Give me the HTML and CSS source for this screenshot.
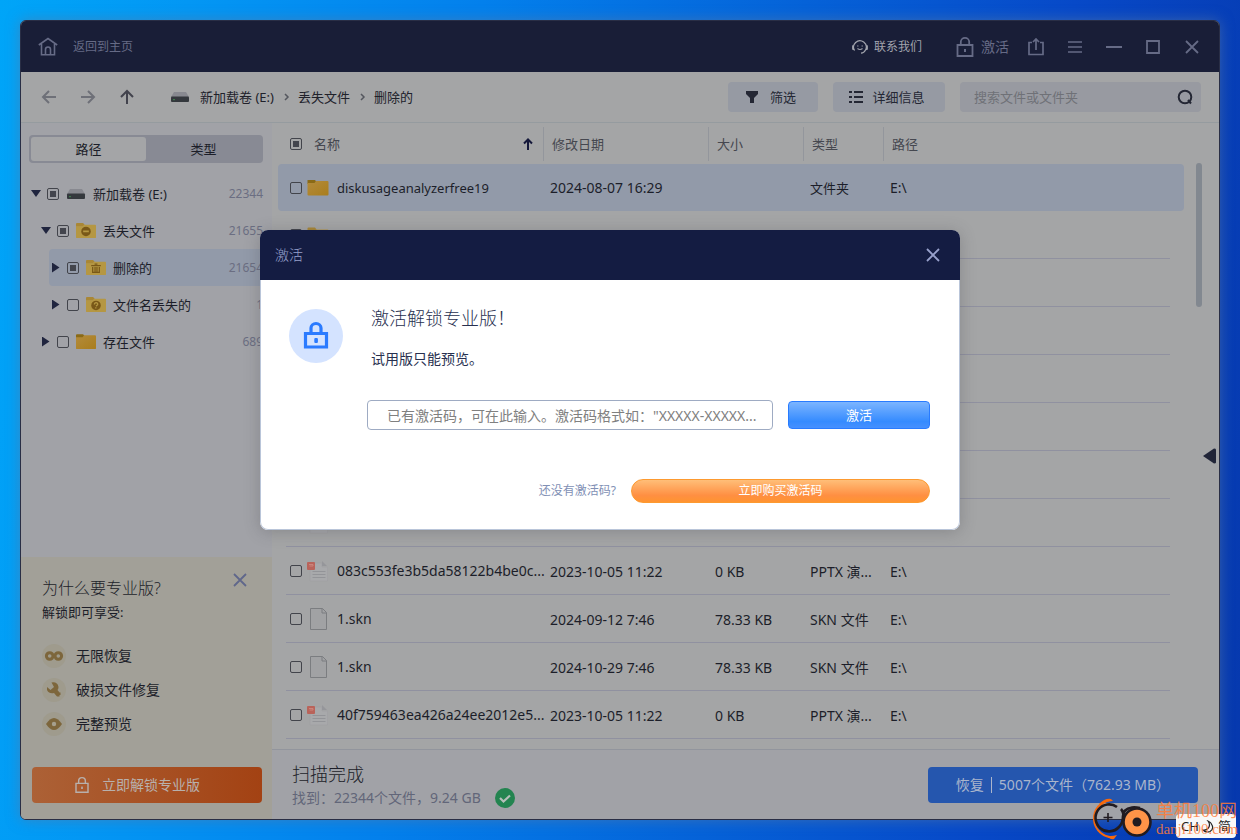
FILE: index.html
```html
<!DOCTYPE html>
<html lang="zh-CN">
<head>
<meta charset="utf-8">
<title>激活</title>
<link rel="stylesheet" href="styles.css">
</head>
<body>
<svg class="defs" aria-hidden="true">
  <defs>
    <linearGradient id="gold" x1="0" y1="0" x2="1" y2="1"><stop offset="0" stop-color="#b38b3c"/><stop offset="1" stop-color="#a97d1c"/></linearGradient>
    <symbol id="i-folder" viewBox="0 0 21 17"><path d="M0 1.5Q0 1 1 1h6.5l1.5 2v2H0z" fill="#8a6a16"/><path d="M0 4h7l1.5-2H20q1 0 1 1v12.5q0 1-1 1H1q-1 0-1-1z" fill="url(#gold)"/></symbol>
    <symbol id="i-folder-light" viewBox="0 0 21 17"><path d="M0 1.5Q0 .5 1 .5h6.500l1.500 2v2H0z" fill="#a98736"/><path d="M0 4h7l1.500-1.500H20q1 0 1 1v12q0 1-1 1H1q-1 0-1-1z" fill="#b59743"/></symbol>
    <symbol id="i-drive" viewBox="0 0 18 12"><path d="M3 1h12l3 5H0z" fill="#888990"/><rect y="5.500" width="18" height="5.500" rx="1" fill="#34383d"/><rect x="2" y="8" width="2" height="1.200" fill="#3d7a4a"/></symbol>
    <symbol id="i-file" viewBox="0 0 20 24"><path d="M2.500 1.500h12l4 4v17h-16z" fill="#a1a2a4" stroke="#7b7d80"/><path d="M14 1.500v4.500h4.500" fill="none" stroke="#7b7d80"/></symbol>
    <symbol id="i-ppt" viewBox="0 0 22 24"><path d="M3 4h12v4h5.500v14H3z" fill="#a8a9ab" stroke="#9fa0a2" stroke-width=".6"/><path d="M15 2l5 5H15z" fill="#95969a"/><path d="M5.500 12.500h13M5.500 15.500h13M5.500 18.500h13" stroke="#939498"/><rect x="0" y="3" width="8" height="8" rx="1" fill="#b9635a"/><path d="M2 5.500h4v1.500H2.500" fill="none" stroke="#cf8d84" stroke-width=".8"/></symbol>
    <symbol id="i-lock" viewBox="0 0 20 22"><path d="M2.500 9h15v11h-15zM5.800 9V6a4.200 4.200 0 0 1 8.400 0v3" fill="none" stroke="currentColor" stroke-width="1.800"/><rect x="9" y="13" width="2" height="3" fill="currentColor"/></symbol>
    <symbol id="i-close" viewBox="0 0 16 16"><path d="M2 2l12 12M14 2L2 14" stroke="currentColor" stroke-width="1.800"/></symbol>
  </defs>
</svg>

<main class="window">
  <header class="titlebar">
    <button class="home">
      <svg width="20" height="20" viewBox="0 0 20 20" fill="none" stroke="currentColor" stroke-width="1.600"><path d="M.8 8L10 1.500 19.200 8M3.500 7v10.700h13V7M7.500 17.500v-5a2.500 2.500 0 0 1 5 0v5"/></svg>
      返回到主页
    </button>
    <button class="contact">
      <svg width="16" height="16" viewBox="0 0 16 16" fill="none" stroke="currentColor" stroke-width="1.200"><path d="M2.600 11.500A6.300 6.300 0 1 1 13.500 11q-1.500 3-4.500 3.200M1.800 6.500L.7 7v3l1.300.6M14.200 6.500l1.100.5v3l-1.300.6M5.500 9.500q2.500 2 5 0M5.800 6.500v1M10.200 6.500v1"/></svg>
      联系我们
    </button>
    <button class="activate-link"><svg width="20" height="22"><use href="#i-lock"/></svg>激活</button>
    <nav class="controls" aria-label="窗口">
      <button aria-label="导出"><svg width="18" height="18" viewBox="0 0 18 18" fill="none" stroke="currentColor" stroke-width="1.700"><path d="M5 4.500H2V16.500h14V4.500h-3M9 12V1.500M6 4l3-3 3 3"/></svg></button>
      <button aria-label="菜单"><svg width="16" height="16" viewBox="0 0 16 16" stroke="currentColor" stroke-width="1.700"><path d="M1 3h14M1 8h14M1 13h14"/></svg></button>
      <button aria-label="最小化"><svg width="16" height="16" viewBox="0 0 16 16" stroke="currentColor" stroke-width="2"><path d="M0 8h16"/></svg></button>
      <button aria-label="最大化"><svg width="16" height="16" viewBox="0 0 16 16" fill="none" stroke="currentColor" stroke-width="1.800"><path d="M2 2h12v12H2z"/></svg></button>
      <button aria-label="关闭"><svg width="16" height="16"><use href="#i-close"/></svg></button>
    </nav>
  </header>

  <div class="toolbar">
    <div class="history">
      <button class="dim" aria-label="后退"><svg width="16" height="16" viewBox="0 0 16 16"><path d="M15 8H2M8 2L2 8l6 6"/></svg></button>
      <button class="dim" aria-label="前进"><svg width="16" height="16" viewBox="0 0 16 16"><path d="M1 8h13M8 2l6 6-6 6"/></svg></button>
      <button aria-label="向上"><svg width="16" height="16" viewBox="0 0 16 16"><path d="M8 15V2M2 8l6-6 6 6"/></svg></button>
    </div>
    <nav class="crumbs" aria-label="位置">
      <svg width="18" height="12"><use href="#i-drive"/></svg>
      <a href="#">新加载卷 (E:)</a>
      <svg class="chev" width="6" height="8" viewBox="0 0 6 8"><path d="M1 1l3 3-3 3"/></svg>
      <a href="#">丢失文件</a>
      <svg class="chev" width="6" height="8" viewBox="0 0 6 8"><path d="M1 1l3 3-3 3"/></svg>
      <a href="#">删除的</a>
    </nav>
    <button class="tool filter"><svg width="12" height="12" viewBox="0 0 12 12"><path d="M0 0h12v3L8 7v5H4V7L0 3z" fill="currentColor"/></svg>筛选</button>
    <button class="tool detail"><svg width="14" height="12" viewBox="0 0 14 12"><path d="M0 1h3M5 1h9M0 6h3M5 6h9M0 11h3M5 11h9" stroke="currentColor" stroke-width="1.800"/></svg>详细信息</button>
    <div class="search">
      <input type="search" aria-label="搜索" placeholder="搜索文件或文件夹">
      <svg width="16" height="16" viewBox="0 0 16 16" fill="none" stroke="currentColor" stroke-width="2"><circle cx="8" cy="8" r="6.300"/><path d="M11 11l3 3.500"/></svg>
    </div>
  </div>

  <div class="content">
    <aside class="sidebar">
      <div class="browse">
        <div class="tabs"><button class="on">路径</button><button>类型</button></div>
        <ul class="tree">
          <li class="node"><span class="tri down"></span><label><input type="checkbox" class="some"><svg width="20" height="12"><use href="#i-drive"/></svg><span>新加载卷 (E:)</span></label><span class="count">22344</span></li>
          <li class="node l1"><span class="tri down"></span><label><input type="checkbox" class="some"><svg width="20" height="17" viewBox="0 0 21 17"><use href="#i-folder-light"/><circle cx="10.500" cy="9.500" r="5" fill="#795818"/><path d="M7.500 9.500h6" stroke="#b59743" stroke-width="1.800"/></svg><span>丢失文件</span></label><span class="count">21655</span></li>
          <li class="node l2 sel"><span class="tri"></span><label><input type="checkbox" class="some"><svg width="20" height="17" viewBox="0 0 21 17"><use href="#i-folder-light"/><path d="M5.500 6.500h10M9 5h3M7 8v5.500h7V8M9.500 8v5M11.500 8v5" fill="none" stroke="#795818" stroke-width="1.300"/></svg><span>删除的</span></label><span class="count">21654</span></li>
          <li class="node l2"><span class="tri"></span><label><input type="checkbox"><svg width="20" height="17" viewBox="0 0 21 17"><use href="#i-folder-light"/><circle cx="10.500" cy="9.500" r="5" fill="#795818"/><path d="M8.800 8.500q0-2 2-2 1.700.2 1.600 1.700-.2 1.200-2 2M10.300 11.500v1.300" fill="none" stroke="#b59743" stroke-width="1.300"/></svg><span>文件名丢失的</span></label><span class="count">1</span></li>
          <li class="node l1"><span class="tri"></span><label><input type="checkbox"><svg width="20" height="17"><use href="#i-folder"/></svg><span>存在文件</span></label><span class="count">689</span></li>
        </ul>
      </div>
      <section class="promo">
        <button class="promo-close" aria-label="关闭"><svg width="16" height="16"><use href="#i-close"/></svg></button>
        <h2>为什么要专业版?</h2>
        <p>解锁即可享受:</p>
        <ul>
          <li><svg width="24" height="24" viewBox="0 0 24 24"><circle cx="12" cy="12" r="12" fill="#9f9b8d"/><circle cx="7.700" cy="12" r="3.300" fill="none" stroke="#7d663c" stroke-width="3"/><circle cx="16.300" cy="12" r="3.300" fill="none" stroke="#7d663c" stroke-width="3"/></svg>无限恢复</li>
          <li><svg width="24" height="24" viewBox="0 0 24 24"><circle cx="12" cy="12" r="12" fill="#9f9b8d"/><path d="M9.500 4.500q6-1 7 4.500 0 2-1 3l2 2.500h1v2.500h-1v1.500h-2.500l-3-3.500q-5 1-7-3V9l3.500 3 3.500-3z" fill="#7d663c"/></svg>破损文件修复</li>
          <li><svg width="24" height="24" viewBox="0 0 24 24"><circle cx="12" cy="12" r="12" fill="#9f9b8d"/><path d="M4 12q8-12 16 0-8 12-16 0z" fill="#7d663c"/><circle cx="12" cy="12" r="2.200" fill="#a6a08e"/></svg>完整预览</li>
        </ul>
        <button class="unlock"><svg width="16" height="18"><use href="#i-lock"/></svg>立即解锁专业版</button>
      </section>
    </aside>

    <section class="main">
      <div class="list">
        <table>
          <colgroup><col class="c-name"><col class="c-date"><col class="c-size"><col class="c-type"><col></colgroup>
          <thead>
            <tr>
              <th><div class="name"><input type="checkbox" class="some" aria-label="全选"><span class="grow">名称</span><svg width="10" height="12" viewBox="0 0 10 12" fill="none" stroke="#14183a" stroke-width="2"><path d="M5 12V2M1 5.500l4-4 4 4"/></svg></div></th>
              <th>修改日期</th><th>大小</th><th>类型</th><th>路径</th>
            </tr>
          </thead>
          <tbody>
            <tr class="picked"><td><label class="name"><input type="checkbox"><svg width="22" height="17"><use href="#i-folder"/></svg>diskusageanalyzerfree19</label></td><td>2024-08-07 16:29</td><td></td><td><span class="cjk">文件夹</span></td><td>E:\</td></tr>
            <tr><td><div class="name"><input type="checkbox" aria-label="选择"><svg width="22" height="17"><use href="#i-folder-light"/></svg></div></td><td></td><td></td><td></td><td></td></tr>
            <tr><td></td><td></td><td></td><td></td><td></td></tr>
            <tr><td></td><td></td><td></td><td></td><td></td></tr>
            <tr><td></td><td></td><td></td><td></td><td></td></tr>
            <tr><td></td><td></td><td></td><td></td><td></td></tr>
            <tr><td></td><td></td><td></td><td></td><td></td></tr>
            <tr><td><div class="name"><input type="checkbox" aria-label="选择"><svg width="22" height="24"><use href="#i-ppt"/></svg></div></td><td></td><td></td><td></td><td></td></tr>
            <tr><td><label class="name"><input type="checkbox"><svg width="22" height="24"><use href="#i-ppt"/></svg>083c553fe3b5da58122b4be0c...</label></td><td>2023-10-05 11:22</td><td>0 KB</td><td>PPTX 演...</td><td>E:\</td></tr>
            <tr><td><label class="name"><input type="checkbox"><svg width="22" height="24"><use href="#i-file"/></svg>1.skn</label></td><td>2024-09-12 7:46</td><td>78.33 KB</td><td>SKN 文件</td><td>E:\</td></tr>
            <tr><td><label class="name"><input type="checkbox"><svg width="22" height="24"><use href="#i-file"/></svg>1.skn</label></td><td>2024-10-29 7:46</td><td>78.33 KB</td><td>SKN 文件</td><td>E:\</td></tr>
            <tr><td><label class="name"><input type="checkbox"><svg width="22" height="24"><use href="#i-ppt"/></svg>40f759463ea426a24ee2012e5...</label></td><td>2023-10-05 11:22</td><td>0 KB</td><td>PPTX 演...</td><td>E:\</td></tr>
          </tbody>
        </table>
        <div class="scroll"><div class="thumb"></div></div>
        <button class="expand" aria-label="展开预览"><svg width="13" height="16" viewBox="0 0 13 16"><path d="M0 8L11 .5q2 0 2 1v13q0 1-2 1z" fill="#212538"/></svg></button>
      </div>
      <footer class="status">
        <div class="grow">
          <h2>扫描完成</h2>
          <p>找到：22344个文件，9.24 GB
            <svg width="20" height="20" viewBox="0 0 20 20"><circle cx="10" cy="10" r="10" fill="#238450"/><path d="M5 10l3.500 3.500L15 7.500" fill="none" stroke="#b5bfba" stroke-width="2.200"/></svg></p>
        </div>
        <button class="recover">恢复<span class="bar"></span>5007个文件（762.93 MB）</button>
      </footer>
    </section>
  </div>
</main>

<dialog class="modal" open aria-label="激活">
  <header><span>激活</span><button aria-label="关闭"><svg width="16" height="16"><use href="#i-close"/></svg></button></header>
  <form class="body">
    <svg class="badge" width="54" height="54" viewBox="0 0 54 54"><circle cx="27" cy="27" r="27" fill="#d4e3ff"/><path d="M16.500 24.500h21v13.500h-21zM22 24v-5a5 4.500 0 0 1 10 0v5" fill="none" stroke="#2b7bff" stroke-width="3.200"/><rect x="25.300" y="29" width="3.600" height="5" rx="1" fill="#2b7bff"/></svg>
    <div class="fields">
      <h1>激活解锁专业版！</h1>
      <p>试用版只能预览。</p>
      <div class="row"><input type="text" aria-label="激活码" placeholder='已有激活码，可在此输入。激活码格式如："XXXXX-XXXXX...'><button type="button" class="go">激活</button></div>
      <div class="row buyrow"><a href="#">还没有激活码?</a><button type="button" class="buy">立即购买激活码</button></div>
    </div>
  </form>
</dialog>

<div class="ime">CH <svg width="13" height="13" viewBox="0 0 13 13"><path d="M6 1q3 4 0 7.500Q4 10.500 1 10q3 3 7 1.500Q12 9 10 5 9 2 6 1z" fill="none" stroke="currentColor" stroke-width="1.200"/></svg> 简</div>
<div class="mark">
  <svg width="64" height="42" viewBox="0 0 64 42" fill="none"><path d="M21 2A18 18 0 0 0 24 39" stroke="#f8690c" stroke-width="2"/><path d="M9 6q6-6 12-5l2 2q-7 0-12 5zM15 37q5 2 12 0l-3 4q-2 1-5-1z" fill="#f8690c"/><path d="M27 9A13.500 13.500 0 1 0 29 29Q33 25 33 18T42 9.500q3-.5 8 .5" stroke="#211b20" stroke-width="2.600"/><path d="M18 15v9M13.500 19.500h9" stroke="#211b20" stroke-width="1.600"/><circle cx="47" cy="24" r="13.500" fill="#ff9448" stroke="#211b20" stroke-width="2.600"/><circle cx="47" cy="24" r="4.500" fill="#211b20"/><path d="M31 11q2 2 3 7" stroke="#211b20" stroke-width="2.600"/></svg>
  <div><b>单机100网</b><span>danji100.com</span></div>
</div>
</body>
</html>
```

FILE: styles.css
```css
* { box-sizing: border-box; }
html, body { height: 100%; }
body {
  margin: 0;
  padding: 20px;
  min-height: 820px;
  overflow: hidden;
  font: 400 14px/20px "Noto Sans", "Noto Sans CJK SC", sans-serif;
  color: #1c1e29;
  background: linear-gradient(97deg, #00a5f8 0%, #0397f4 14%, #0380ec 36%, #0562d8 60%, #0749c8 80%, #0638ad 100%);
}
h1, h2, p, ul { margin: 0; padding: 0; font-weight: inherit; }
h1, h2 { font-weight: 300; }
ul { list-style: none; }
button { display: flex; align-items: center; justify-content: center; border: 0; padding: 0; background: none; color: inherit; font: inherit; white-space: nowrap; cursor: pointer; }
input { font: inherit; }
a { color: inherit; text-decoration: none; }
svg { flex: none; display: block; }
.defs { position: absolute; width: 0; height: 0; }
.grow { flex: 1; }

input[type=checkbox] {
  appearance: none;
  flex: none;
  width: 12px;
  height: 12px;
  margin: 0;
  border: 1px solid #42444b;
  border-radius: 2px;
}
input.some { background: linear-gradient(#43454d, #43454d) center / 6px 6px no-repeat; }

.window {
  display: flex;
  flex-direction: column;
  height: 100%;
  border: 1px solid #292e45;
  border-radius: 6px;
  overflow: hidden;
  background: #a4a5a6;
  box-shadow: 0 0 14px rgba(90, 120, 160, .6);
}

.titlebar { display: flex; align-items: center; height: 51px; padding: 0 8px 0 17px; background: #191e37; color: #666b86; }
.home { gap: 15px; margin-right: auto; font-size: 12px; }
.contact { gap: 6px; margin-right: 33px; font-size: 12px; color: #a2a4ad; }
.activate-link { gap: 6px; margin-right: 7px; }
.controls { display: flex; }
.controls button { width: 39px; height: 39px; }

.toolbar { display: flex; align-items: center; height: 51px; padding-right: 18px; border-bottom: 1px solid #959b9f; font-size: 13px; }
.history { display: flex; padding-left: 8px; }
.history button { width: 39px; height: 30px; color: #42434d; }
.history .dim { color: #6e7078; }
.history svg { fill: none; stroke: currentColor; stroke-width: 2; }
.crumbs { display: flex; align-items: center; flex: 1; padding-left: 25px; color: #20212a; white-space: nowrap; }
.crumbs > svg:first-child { margin-right: 11px; }
.chev { margin: 0 8px 0 10px; fill: none; stroke: #55575f; stroke-width: 1.5; }
.tool { height: 30px; margin-right: 15px; padding-right: 4px; border-radius: 4px; background: #969aa3; color: #242734; }
.filter { width: 90px; gap: 12px; }
.detail { width: 112px; gap: 9px; }
.search { display: flex; align-items: center; width: 241px; height: 30px; padding: 0 8px 0 14px; border-radius: 4px; background: #989aa1; color: #242734; }
.search input { flex: 1; min-width: 0; padding: 0; border: 0; outline: 0; background: none; }
.search input::placeholder { color: #6f7177; opacity: 1; }

.content { display: flex; flex: 1; min-height: 0; }
.sidebar { display: flex; flex-direction: column; width: 251px; background: #a1a2a7; }
.browse { flex: 1; padding: 12px 9px 12px 8px; font-size: 13px; }
.tabs { display: flex; height: 28px; padding: 2px; border-radius: 4px; background: #888a94; color: #1c1e29; }
.tabs button { flex: 1; border-radius: 3px; }
.tabs .on { background: #a4a5a7; }
.tree { margin-top: 12px; }
.node { display: flex; align-items: center; height: 37px; padding-left: 2px; border-radius: 4px; }
.node.l1 { margin-left: 10px; }
.node.l2 { margin-left: 20px; }
.node.sel { background: #929aa9; }
.node label { display: flex; align-items: center; flex: 1; white-space: nowrap; }
.node label svg { margin: 0 7px; }
.tri { width: 10px; height: 10px; margin-right: 6px; background: #20253f; clip-path: polygon(10% 0, 85% 50%, 10% 100%); }
.tri.down { clip-path: polygon(0 15%, 100% 15%, 50% 85%); }
.count { color: #6b6e82; font-size: 12px; }

.promo { position: relative; padding: 19px 10px 16px 11px; background: #a2a098; }
.promo h2 { padding-left: 10px; font-size: 16px; line-height: 24px; }
.promo p { padding-left: 10px; font-size: 13px; line-height: 24px; }
.promo ul { margin: 15px 0 26px 10px; }
.promo li { display: flex; align-items: center; gap: 10px; height: 34px; }
.promo-close { position: absolute; top: 15px; right: 24px; color: #60678b; }
.unlock { gap: 12px; width: 100%; height: 36px; padding-right: 20px; border-radius: 4px; background: linear-gradient(90deg, #ac6136, #a34213); color: #b8b0ac; }

.main { display: flex; flex-direction: column; flex: 1; min-width: 0; }
.list { display: flex; flex: 1; min-height: 0; padding-left: 6px; }
table { flex: 1; align-self: flex-start; width: 100%; border-collapse: separate; border-spacing: 0; table-layout: fixed; }
.c-name { width: 265px; }
.c-date { width: 165px; }
.c-size { width: 95px; }
.c-type { width: 80px; }
th { height: 41px; padding: 0 9px; text-align: left; font-size: 13px; font-weight: inherit; color: #45474f; }
th + th { background: linear-gradient(#93969c, #93969c) left center / 1px 34px no-repeat; }
td { height: 48px; padding: 2px 7px 0; white-space: nowrap; }
th:first-child, td:first-child { padding-left: 12px; padding-right: 0; }
td:first-child { padding-top: 0; }
tbody tr { background: linear-gradient(#9091a0, #9091a0) 8px 100% / calc(100% - 22px) 1px no-repeat; }
tr.picked { background: none; }
.picked td { height: 47px; padding-top: 0; background: #929aa9; }
.picked td:first-child { border-radius: 4px 0 0 4px; }
.picked td:last-child { border-radius: 0 4px 4px 0; }
.picked .name, .cjk { font-size: 13px; }
.name { display: flex; align-items: center; }
td .name svg { margin: 0 8px 0 5px; }
th .name .grow { padding-left: 12px; }
th .name svg { margin-right: 10px; }
.scroll { width: 6px; margin: 40px 1px 0 12px; }
.thumb { height: 144px; border-radius: 3px; background: #828890; }
.expand { width: 13px; height: 16px; margin: 325px 3px 0 0; }

.status { display: flex; align-items: center; height: 70px; padding: 0 21px 0 20px; border-top: 1px solid #92959d; background: #a1a2a7; }
.status h2 { font-size: 18px; line-height: 26px; }
.status p { display: flex; align-items: center; gap: 14px; line-height: 22px; color: #626679; }
.recover { width: 270px; height: 36px; border-radius: 4px; background: #2556ae; color: #aab5cc; }
.bar { width: 1px; height: 16px; margin: 0 7px; background: #aab5cc; }

.modal { position: absolute; top: 230px; left: calc(50% - 360px); width: 700px; margin: 0; padding: 0; border: 0; border-radius: 8px; overflow: hidden; background: #fff; box-shadow: 0 2px 16px rgba(60, 62, 70, .28); color: #28304f; }
.modal header { display: flex; align-items: center; justify-content: space-between; height: 50px; padding: 0 19px 0 15px; background: #141c42; color: #98a1cc; }
.modal header span { font-weight: 300; }
.body { display: flex; align-items: flex-start; padding: 24px 29px 26px 28px; border: 1px solid #b9c5d9; border-top: 0; border-radius: 0 0 8px 8px; }
.badge { margin-top: 5px; }
.fields { flex: 1; padding-left: 24px; }
.fields h1 { padding-left: 4px; font-size: 18px; line-height: 28px; }
.fields p { padding-left: 4px; margin: 17px 0 31px; }
.row { display: flex; align-items: center; }
.row input { flex: 1; min-width: 0; height: 30px; padding: 0 4px 0 19px; border: 1px solid #9eabc3; border-radius: 4px; }
.row input::placeholder { color: #808080; opacity: 1; }
.go { width: 142px; height: 28px; margin-left: 15px; border: 1px solid #287bff; border-radius: 4px; background: linear-gradient(#7cb5ff, #358bff 75%, #4590ff); color: #fff; font-size: 13px; }
.buyrow { justify-content: flex-end; gap: 15px; margin-top: 49px; font-size: 12px; color: #8190b5; }
.buy { width: 299px; height: 24px; border: 1px solid #fd9a30; border-radius: 12px; background: linear-gradient(#ffbe78, #ff8f42 70%, #ff9430); color: #fff; }

.ime { position: absolute; right: 4px; bottom: 2px; display: flex; align-items: center; justify-content: center; gap: 3px; width: 60px; height: 24px; border-radius: 4px; background: #f8f8f8; color: #222; font-size: 13px; }
.mark { position: absolute; right: 2px; bottom: 0; display: flex; align-items: center; gap: 2px; color: rgba(255, 124, 56, .85); font-family: "Liberation Serif", "Noto Sans CJK SC", serif; }
.mark b { display: block; font-size: 18px; line-height: 20px; font-weight: 400; }
.mark span { display: block; font-size: 15px; line-height: 16px; }
```
